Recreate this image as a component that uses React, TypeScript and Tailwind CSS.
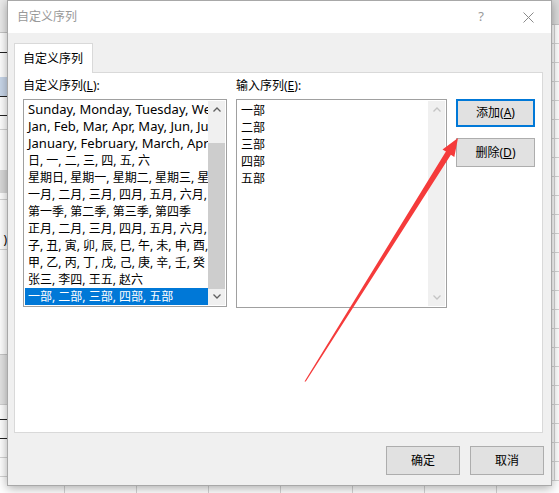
import React from "react";

const LEFT_ITEMS = [
  "Sunday, Monday, Tuesday, Wednesday, Thursday, Friday, Saturday",
  "Jan, Feb, Mar, Apr, May, Jun, Jul, Aug, Sep, Oct, Nov, Dec",
  "January, February, March, April, May, June, July",
  "日, 一, 二, 三, 四, 五, 六",
  "星期日, 星期一, 星期二, 星期三, 星期四",
  "一月, 二月, 三月, 四月, 五月, 六月, 七月",
  "第一季, 第二季, 第三季, 第四季",
  "正月, 二月, 三月, 四月, 五月, 六月, 七月",
  "子, 丑, 寅, 卯, 辰, 巳, 午, 未, 申, 酉, 戌, 亥",
  "甲, 乙, 丙, 丁, 戊, 己, 庚, 辛, 壬, 癸",
  "张三, 李四, 王五, 赵六",
  "一部, 二部, 三部, 四部, 五部",
];

const INPUT_ITEMS = ["一部", "二部", "三部", "四部", "五部"];

const font = "font-['Noto_Sans','Noto_Sans_CJK_SC',sans-serif]";

function Chevron({ up, color }: { up?: boolean; color: string }) {
  return (
    <svg width="8" height="5" viewBox="0 0 8 5">
      <polyline
        points={up ? "0.5,4.5 4,1 7.5,4.5" : "0.5,0.5 4,4 7.5,0.5"}
        fill="none"
        stroke={color}
        strokeWidth="1.3"
      />
    </svg>
  );
}

function Scrollbar({ enabled }: { enabled: boolean }) {
  const c = enabled ? "#606060" : "#c4c4c4";
  return (
    <div className="w-[17px] h-full flex flex-col bg-[#f0f0f0] shrink-0">
      <div className="h-[17px] flex items-center justify-center">
        <Chevron up color={c} />
      </div>
      <div className="flex-1 flex flex-col">
        {enabled && (
          <>
            <div className="h-[25px]" />
            <div className="h-[146px] bg-[#cdcdcd]" />
          </>
        )}
      </div>
      <div className="h-[17px] flex items-center justify-center">
        <Chevron color={c} />
      </div>
    </div>
  );
}

function Button({ children, primary }: { children: React.ReactNode; primary?: boolean }) {
  return (
    <div
      className={`flex-1 flex items-center justify-center bg-[#e1e1e1] text-[12px] text-black ${
        primary ? "border-2 border-[#0078d7]" : "border border-[#adadad]"
      }`}
    >
      {children}
    </div>
  );
}

function LeftStrip() {
  const rows: [number, string, string][] = [
    [33, "bg-[#ebebeb]", "border-[#c6c6c6]"],
    [20, "bg-white", "border-[#222]"],
    [24, "bg-white", "border-transparent"],
    [20, "bg-[#c9d7ea]", "border-[#222]"],
    [19, "bg-white", "border-[#222]"],
    [14, "bg-white", "border-[#d4d4d4]"],
    [40, "bg-white", "border-transparent"],
    [23, "bg-[#dadada]", "border-transparent"],
    [7, "bg-white", "border-[#d4d4d4]"],
    [50, "bg-white", "border-[#d4d4d4]"],
    [105, "bg-white", "border-[#c8c8c8]"],
    [50, "bg-[#e4e4e4]", "border-[#d0d0d0]"],
    [15, "bg-white", "border-[#222]"],
    [19, "bg-white", "border-[#222]"],
    [19, "bg-white", "border-[#d4d4d4]"],
    [19, "bg-white", "border-[#d4d4d4]"],
  ];
  return (
    <div className="w-[7px] shrink-0 flex flex-col overflow-hidden">
      {rows.map(([h, bg, bd], i) => (
        <div
          key={i}
          style={{ height: h }}
          className={`${bg} border-b ${bd} shrink-0 flex items-end justify-end text-[12px] leading-[17px] ${font}`}
        >
          {i === 9 ? <span className="pb-[1px]">)</span> : null}
        </div>
      ))}
    </div>
  );
}

function RightStrip() {
  const lines = Array.from({ length: 24 });
  return (
    <div className="w-[7px] shrink-0 flex flex-col overflow-hidden">
      <div className="h-[25px] shrink-0 bg-[#dcdcdc] border-b border-[#c6c6c6]" />
      {lines.map((_, i) => (
        <div key={i} className="h-[19px] shrink-0 border-b border-[#d4d4d4] flex">
          <div className="w-[3px] border-r border-[#d4d4d4]" />
        </div>
      ))}
    </div>
  );
}

function BottomStrip() {
  const cells = Array.from({ length: 7 });
  return (
    <div className="h-[7px] flex bg-white">
      <div className="w-[58px] shrink-0 border-r border-[#d4d4d4]" />
      {cells.map((_, i) => (
        <div key={i} className="w-[72px] shrink-0 border-r border-[#d4d4d4]" />
      ))}
    </div>
  );
}

function Arrow() {
  return (
    <svg className="absolute inset-0 pointer-events-none z-20" width="559" height="493">
      <polygon
        points="304.5,381.5 305.8,381.5 450.9,154.8 454.3,156.9 458,138 442.5,149.5 445.9,151.6"
        fill="#f53b3b"
      />
    </svg>
  );
}

export default function App() {
  return (
    <div className={`relative w-[559px] h-[493px] bg-white overflow-hidden flex ${font}`}>
      <LeftStrip />
      <div className="w-[545px] shrink-0 flex flex-col">
        <div className="relative z-10 h-[486px] flex flex-col border border-[#a8a8a8] bg-[#f0f0f0] shadow-[0_2px_10px_rgba(0,0,0,0.35)]">
          {/* Title bar */}
          <div className="h-[32px] bg-white flex items-center shrink-0">
            <span className="ml-[9px] text-[12px] text-[#999]">自定义序列</span>
            <span className="ml-auto text-[13px] text-[#999] w-[12px] text-center mr-[36px]">?</span>
            <svg width="11" height="11" viewBox="0 0 11 11" className="mr-[17px]">
              <path d="M0.5 0.5 L10.5 10.5 M10.5 0.5 L0.5 10.5" stroke="#8a8a8a" strokeWidth="1" />
            </svg>
          </div>

          {/* Body */}
          <div className="flex-1 flex flex-col pl-[6px] pr-[8px] pt-[10px]">
            <div className="flex">
              <div className="relative z-10 -mb-px h-[30px] w-[79px] bg-white border border-b-0 border-[#d9d9d9] flex items-center pl-[8px] text-[12px] text-black">
                自定义序列
              </div>
            </div>
            <div className="h-[361px] bg-white border border-[#d9d9d9] flex items-start gap-[9px] pl-[8px] pt-[4px]">
              {/* Custom list */}
              <div className="flex flex-col w-[204px]">
                <div className="text-[12px] leading-[17px] mb-[5px] text-black">
                  自定义序列(<span className="underline">L</span>):
                </div>
                <div className="h-[208px] border border-[#a0a0a0] flex p-px">
                  <div className="flex-1 min-w-0 flex flex-col overflow-hidden">
                    {LEFT_ITEMS.map((item, i) => {
                      const selected = i === LEFT_ITEMS.length - 1;
                      const latin = i < 3;
                      return (
                        <div
                          key={item}
                          className={`h-[17px] leading-[17px] pl-[3px] whitespace-nowrap overflow-hidden ${
                            latin ? "text-[13px]" : "text-[12px]"
                          } ${selected ? "bg-[#0078d7] text-white" : "text-black"}`}
                        >
                          {item}
                        </div>
                      );
                    })}
                  </div>
                  <Scrollbar enabled />
                </div>
              </div>

              {/* Input list */}
              <div className="flex flex-col w-[211px]">
                <div className="text-[12px] leading-[17px] mb-[5px] text-black">
                  输入序列(<span className="underline">E</span>):
                </div>
                <div className="h-[209px] border border-[#a0a0a0] flex p-px">
                  <div className="flex-1 flex flex-col pl-[3px] pt-px">
                    {INPUT_ITEMS.map((item) => (
                      <div key={item} className="h-[17px] leading-[17px] text-[12px] text-black">
                        {item}
                      </div>
                    ))}
                  </div>
                  <Scrollbar enabled={false} />
                </div>
              </div>

              {/* Buttons */}
              <div className="flex flex-col w-[79px] mt-[22px]">
                <div className="h-[28px] flex flex-col">
                  <Button primary>
                    添加(<span className="underline">A</span>)
                  </Button>
                </div>
                <div className="h-[29px] mt-[11px] flex flex-col">
                  <Button>
                    删除(<span className="underline">D</span>)
                  </Button>
                </div>
              </div>
            </div>

            {/* Footer */}
            <div className="flex justify-end gap-[10px] mt-[13px] -mr-[1px]">
              <div className="w-[74px] h-[29px] flex flex-col">
                <Button>确定</Button>
              </div>
              <div className="w-[74px] h-[29px] flex flex-col">
                <Button>取消</Button>
              </div>
            </div>
          </div>
        </div>
        <BottomStrip />
      </div>
      <RightStrip />
      <Arrow />
    </div>
  );
}
